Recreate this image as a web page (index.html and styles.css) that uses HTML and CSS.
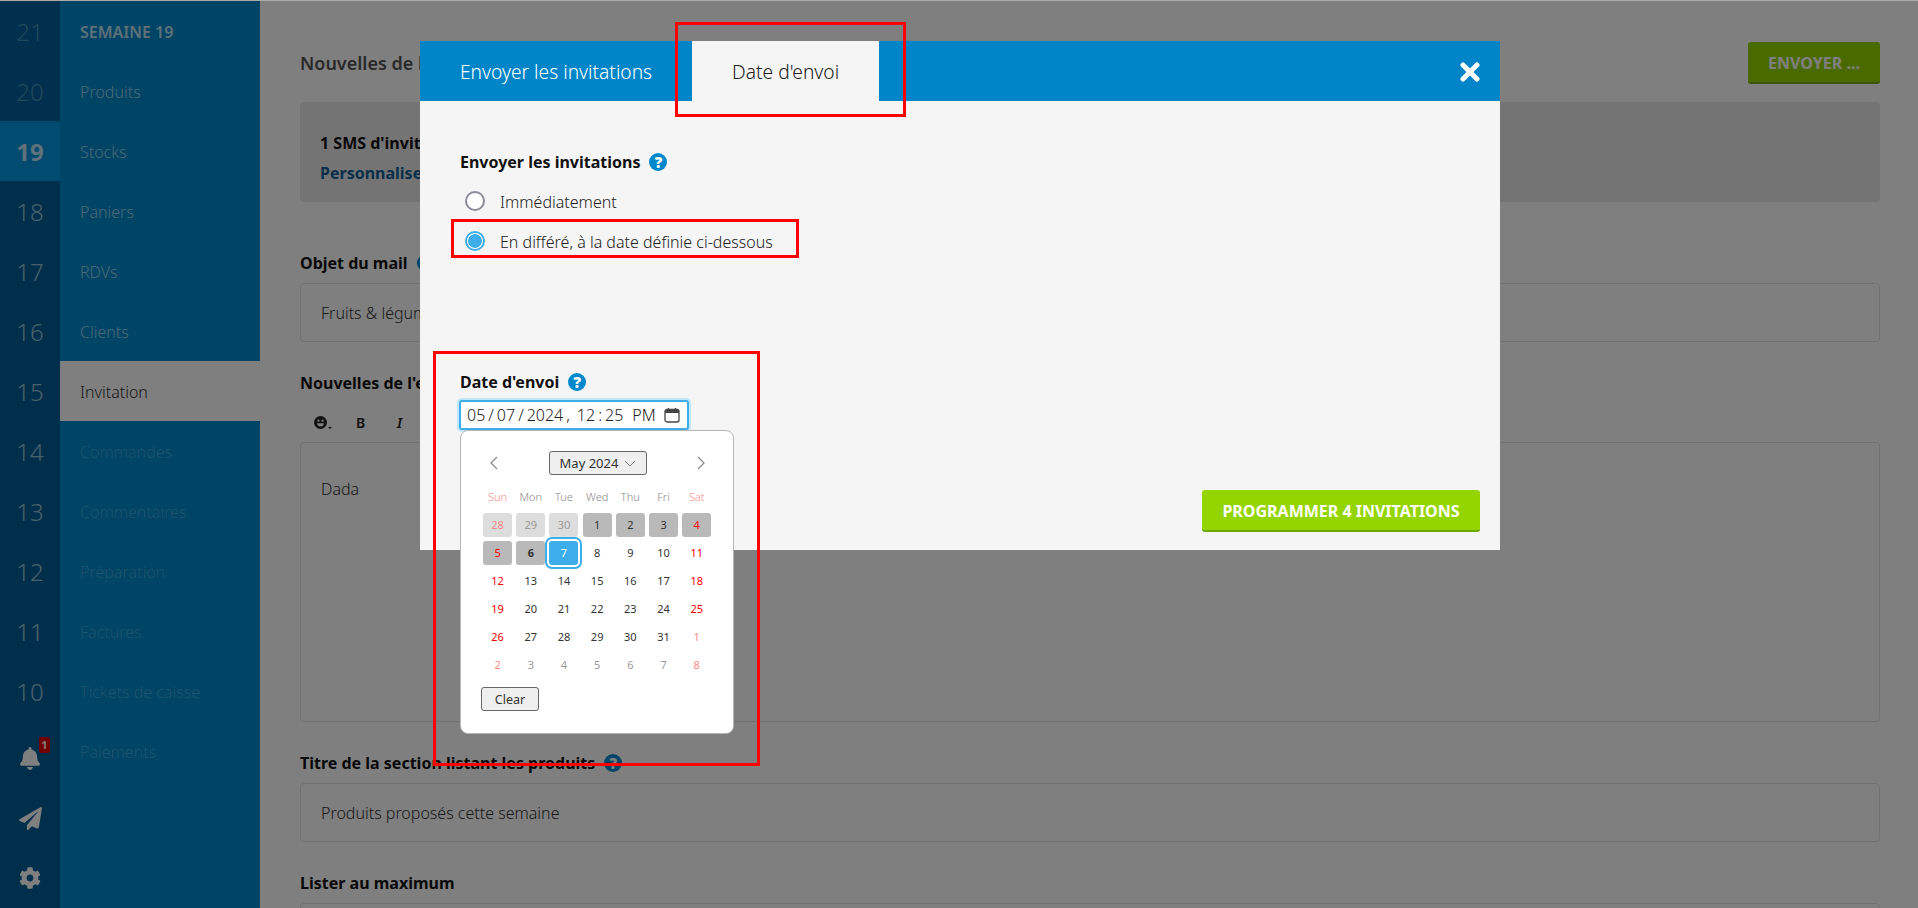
FILE: index.html
```html
<!DOCTYPE html>
<html lang="fr">
<head>
<meta charset="utf-8">
<title>Invitation</title>
<link rel="stylesheet" href="styles.css">
</head>
<body>
<div class="app">
  <nav class="rail">
    <a class="week past">21</a>
    <a class="week past">20</a>
    <a class="week current">19</a>
    <a class="week">18</a>
    <a class="week">17</a>
    <a class="week">16</a>
    <a class="week">15</a>
    <a class="week">14</a>
    <a class="week">13</a>
    <a class="week">12</a>
    <a class="week">11</a>
    <a class="week">10</a>
    <div class="rail-tools">
      <a class="tool bell">
        <svg class="ic-bell" viewBox="0 0 448 512"><path d="M224 512c35.32 0 63.97-28.65 63.97-64H160.03c0 35.35 28.65 64 63.97 64zm215.39-149.71c-19.32-20.76-55.47-51.99-55.47-154.29 0-77.7-54.48-139.9-127.94-155.16V32c0-17.67-14.32-32-31.98-32s-31.98 14.33-31.98 32v20.84C118.56 68.1 64.08 130.3 64.08 208c0 102.3-36.15 133.53-55.47 154.29-6 6.45-8.66 14.16-8.61 21.71.11 16.4 12.98 32 32.1 32h383.8c19.12 0 32-15.6 32.1-32 .05-7.55-2.61-15.27-8.61-21.71z"/></svg>
        <span class="badge">1</span>
      </a>
      <a class="tool">
        <svg class="ic-plane" viewBox="0 0 512 512"><path d="M476 3.2L12.5 270.6c-18.1 10.4-15.8 35.6 2.2 43.2L121 358.4l287.3-253.2c5.5-4.9 13.3 2.6 8.6 8.3L176 407v80.5c0 23.6 28.5 32.9 42.5 15.8L282 426l124.6 52.2c14.2 6 30.4-2.9 33-18.2l72-432C515 7.8 493.3-6.8 476 3.2z"/></svg>
      </a>
      <a class="tool">
        <svg class="ic-gear" viewBox="0 0 512 512"><path d="M487.4 315.7l-42.6-24.6c4.3-23.2 4.3-47 0-70.2l42.6-24.6c4.9-2.8 7.1-8.6 5.5-14-11.1-35.6-30-67.8-54.7-94.6-3.8-4.1-10-5.1-14.8-2.3L380.8 110c-17.9-15.4-38.5-27.3-60.8-35.1V25.8c0-5.6-3.9-10.5-9.4-11.7-36.7-8.2-74.3-7.8-109.2 0-5.5 1.2-9.4 6.1-9.4 11.7V75c-22.2 7.9-42.8 19.8-60.8 35.1L88.7 85.5c-4.9-2.8-11-1.9-14.8 2.3-24.7 26.7-43.6 58.9-54.7 94.6-1.7 5.4.6 11.2 5.5 14L67.3 221c-4.3 23.2-4.3 47 0 70.2l-42.6 24.6c-4.9 2.8-7.1 8.6-5.5 14 11.1 35.6 30 67.8 54.7 94.6 3.8 4.1 10 5.1 14.8 2.3l42.6-24.6c17.9 15.4 38.5 27.3 60.8 35.1v49.2c0 5.6 3.9 10.5 9.4 11.7 36.7 8.2 74.3 7.8 109.2 0 5.5-1.2 9.4-6.1 9.4-11.7v-49.2c22.2-7.9 42.8-19.8 60.8-35.1l42.6 24.6c4.9 2.8 11 1.9 14.8-2.3 24.7-26.7 43.6-58.9 54.7-94.6 1.5-5.5-.7-11.3-5.6-14.1zM256 336c-44.1 0-80-35.9-80-80s35.9-80 80-80 80 35.9 80 80-35.9 80-80 80z"/></svg>
      </a>
    </div>
  </nav>

  <nav class="side">
    <div class="side-item side-title">SEMAINE 19</div>
    <a class="side-item">Produits</a>
    <a class="side-item">Stocks</a>
    <a class="side-item">Paniers</a>
    <a class="side-item">RDVs</a>
    <a class="side-item">Clients</a>
    <a class="side-item active">Invitation</a>
    <a class="side-item off">Commandes</a>
    <a class="side-item off">Commentaires</a>
    <a class="side-item off">Préparation</a>
    <a class="side-item off">Factures</a>
    <a class="side-item off">Tickets de caisse</a>
    <a class="side-item off">Paiements</a>
  </nav>

  <main class="main">
    <header class="page-head">
      <h1 class="page-title">Nouvelles de la semaine</h1>
      <button class="btn-send">ENVOYER ...</button>
    </header>

    <section class="sms-box">
      <div class="sms-line">1 SMS d'invitation</div>
      <a class="sms-link">Personnaliser</a>
    </section>

    <div class="field field-first">
      <div class="label">Objet du mail <span class="help dim">?</span></div>
      <div class="input">Fruits &amp; légumes</div>
    </div>

    <div class="field">
      <div class="label">Nouvelles de l'exploitation</div>
      <div class="toolbar">
        <span class="tb-emoji">
          <svg class="ic-smile" viewBox="0 0 14 14"><circle cx="7" cy="7" r="7"/><circle class="cut" cx="4.8" cy="5" r="1.2"/><circle class="cut" cx="9.2" cy="5" r="1.2"/><path class="cut" d="M3.200 7.800h7.600c-.3 2.200-1.900 3.500-3.800 3.500S3.500 10 3.200 7.800z"/></svg>
          <span class="caret"></span>
        </span>
        <span class="tb-btn">B</span>
        <span class="tb-btn ital">I</span>
      </div>
      <div class="editor">Dada</div>
    </div>

    <div class="field">
      <div class="label">Titre de la section listant les produits <span class="help dim">?</span></div>
      <div class="input">Produits proposés cette semaine</div>
    </div>

    <div class="field">
      <div class="label">Lister au maximum</div>
      <div class="input"></div>
    </div>
  </main>
</div>

<div class="overlay"></div>

<div class="modal">
  <div class="modal-head">
    <div class="tab">Envoyer les invitations</div>
    <div class="tab tab-on">Date d'envoi</div>
    <svg class="close" viewBox="0 0 20 20"><path d="M3 3l14 14M17 3L3 17"/></svg>
  </div>
  <div class="modal-body">
    <div class="label">Envoyer les invitations <span class="help">?</span></div>
    <div class="radios">
      <label class="radio"><span class="dot"></span><span class="radio-text">Immédiatement</span></label>
      <label class="radio"><span class="dot dot-on"></span><span class="radio-text">En différé, à la date définie ci-dessous</span></label>
    </div>

    <div class="date-field">
      <div class="label">Date d'envoi <span class="help">?</span></div>
      <div class="date-input">
        <span>05</span><span>/</span><span>07</span><span>/</span><span>2024</span><span class="comma">,</span><span>12</span><span>:</span><span>25</span><span class="ampm">PM</span>
        <svg class="ic-cal" viewBox="0 0 16 16"><rect x="1" y="2.500" width="14" height="12.500" rx="2"/><path class="fill" d="M1 6v-1.500a2 2 0 0 1 2-2h10a2 2 0 0 1 2 2v1.500z"/><path d="M4.500 1v2.500M11.500 1v2.500"/></svg>
      </div>

      <div class="picker">
        <div class="picker-nav">
          <svg class="chev" viewBox="0 0 8 14"><path d="M7 1L1 7l6 6"/></svg>
          <div class="month-btn">May 2024
            <svg class="month-caret" viewBox="0 0 12 7"><path d="M1 1l5 5 5-5"/></svg>
          </div>
          <svg class="chev" viewBox="0 0 8 14"><path d="M1 1l6 6-6 6"/></svg>
        </div>
        <div class="cal">
          <span class="wd we">Sun</span><span class="wd">Mon</span><span class="wd">Tue</span><span class="wd">Wed</span><span class="wd">Thu</span><span class="wd">Fri</span><span class="wd we">Sat</span>

          <span class="d we out pale">28</span><span class="d out pale">29</span><span class="d out pale">30</span><span class="d past">1</span><span class="d past">2</span><span class="d past">3</span><span class="d we past">4</span>
          <span class="d we past">5</span><span class="d past today">6</span><span class="d sel">7</span><span class="d">8</span><span class="d">9</span><span class="d">10</span><span class="d we">11</span>
          <span class="d we">12</span><span class="d">13</span><span class="d">14</span><span class="d">15</span><span class="d">16</span><span class="d">17</span><span class="d we">18</span>
          <span class="d we">19</span><span class="d">20</span><span class="d">21</span><span class="d">22</span><span class="d">23</span><span class="d">24</span><span class="d we">25</span>
          <span class="d we">26</span><span class="d">27</span><span class="d">28</span><span class="d">29</span><span class="d">30</span><span class="d">31</span><span class="d we out">1</span>
          <span class="d we out">2</span><span class="d out">3</span><span class="d out">4</span><span class="d out">5</span><span class="d out">6</span><span class="d out">7</span><span class="d we out">8</span>
        </div>
        <div class="clear-btn">Clear</div>
      </div>
    </div>

    <button class="btn-go">PROGRAMMER 4 INVITATIONS</button>
  </div>
</div>

<div class="mark mark-tab"></div>
<div class="mark mark-radio"></div>
<div class="mark mark-date"></div>
</body>
</html>
```

FILE: styles.css
```css
* { box-sizing: border-box; }
html, body { margin: 0; height: 908px; overflow: hidden; }
body {
  font-family: "Noto Sans", "Open Sans", sans-serif;
  font-size: 16px;
  color: #333;
  background: #fff;
  border-top: 1px solid #aaa;
}
.app { display: flex; height: 907px; overflow: hidden; }

/* week rail */
.rail { width: 60px; flex: none; background: #005f98; display: flex; flex-direction: column; }
.week {
  height: 60px; flex: none; display: flex; align-items: center; justify-content: center;
  font-size: 24px; font-weight: 300; color: rgba(255,255,255,.62);
}
.week.past { background: #00609a; color: rgba(255,255,255,.3); }
.week.current { background: #0096de; color: rgba(255,255,255,.75); font-weight: 700; }
.rail-tools { margin-top: auto; }
.tool { height: 60px; display: flex; align-items: center; justify-content: center; position: relative; }
.tool svg { fill: #fff; }
.ic-bell { width: 20px; height: 23px; }
.ic-plane { width: 23px; height: 23px; }
.ic-gear { width: 22px; height: 22px; }
.badge {
  position: absolute; left: 39px; top: 9px; width: 11px; height: 16px; border-radius: 2px;
  background: #e60000; color: #fff; font-size: 11px; font-weight: 700; line-height: 16px; text-align: center;
}

/* side menu */
.side { width: 200px; flex: none; background: #0088cc; }
.side-item {
  display: flex; align-items: center; height: 60px; padding: 2px 0 0 20px;
  font-size: 16px; font-weight: 300; color: rgba(255,255,255,.62);
}
.side-title { font-weight: 600; color: rgba(255,255,255,.75); }
.side-item.active { background: #fff; color: #333; }
.side-item.off { color: rgba(255,255,255,.25); }

/* main page */
.main { flex: 1; min-width: 0; padding: 41px 38px 0 40px; }
.page-head { display: flex; align-items: center; justify-content: space-between; height: 42px; }
.page-title { margin: 0; font-size: 18px; font-weight: 600; color: #555; line-height: 42px; }
.btn-send {
  width: 132px; height: 42px; padding: 2px 0 0; border: 0; border-bottom: 2px solid #76ac00; border-radius: 3px;
  background: #94d500; color: #fff; font: 700 16px "Noto Sans", sans-serif;
}
.sms-box { margin-top: 18px; height: 100px; padding: 26px 20px 14px; background: #e9e9e9; border-radius: 4px; }
.sms-line { font-weight: 700; line-height: 30px; color: #111; }
.sms-link { display: block; font-weight: 700; line-height: 30px; color: #0f5f95; }

.field { margin-top: 31px; }
.field-first { margin-top: 51px; }
.label { font-weight: 700; line-height: 20px; color: #111; display: flex; align-items: center; gap: 9px; white-space: nowrap; }
.help {
  width: 18px; height: 18px; border-radius: 50%; background: #0088cc; color: #fff;
  font-size: 15px; font-weight: 900; line-height: 18px; text-align: center; flex: none;
}
.input {
  margin-top: 10px; height: 59px; padding: 0 20px; display: flex; align-items: center;
  border: 1px solid #e4e4e4; border-radius: 4px; background: #fff; font-weight: 300; color: #333;
}
.toolbar { display: flex; align-items: center; height: 49px; padding: 9px 0 0 14px; color: #222; }
.tb-emoji { width: 42px; display: flex; align-items: flex-end; gap: 1px; }
.ic-smile { width: 13px; height: 13px; fill: #222; }
.ic-smile .cut { fill: #fff; }
.caret { width: 0; height: 0; border: 2.500px solid transparent; border-top-color: #222; border-bottom: 0; }
.tb-btn { width: 41px; font-size: 14px; font-weight: 600; }
.ital { font-style: italic; }
.editor {
  height: 280px; padding: 34px 20px; border: 1px solid #e4e4e4; border-radius: 4px;
  font-weight: 300; line-height: 24px; color: #333;
}

/* dimming layer */
.overlay { position: fixed; left: 0; top: 1px; right: 0; bottom: 0; background: rgba(0,0,0,.5); }

/* modal */
.modal { position: absolute; left: 420px; top: 41px; width: 1080px; height: 509px; background: #f5f5f5; display: flex; flex-direction: column; }
.modal-head { height: 60px; flex: none; background: #0085c8; display: flex; align-items: stretch; position: relative; }
.tab { padding: 0 40px; display: flex; align-items: center; font-size: 19.2px; font-weight: 300; color: #fff; }
.tab-on { background: #f5f5f5; color: #222; }
.close { position: absolute; left: 1040px; top: 21px; width: 20px; height: 20px; fill: none; stroke: #fff; stroke-width: 5; stroke-linecap: round; }
.modal-body { flex: 1; padding: 51px 20px 18px 40px; display: flex; flex-direction: column; min-height: 0; }
.radios { margin-top: 9px; display: flex; flex-direction: column; }
.radio { height: 40px; display: flex; align-items: center; gap: 15px; margin-left: 5px; font-weight: 300; color: #222; }
.radio-text { padding-top: 2px; }
.dot { width: 20px; height: 20px; border-radius: 50%; border: 2px solid #8b8b9b; background: #fff; flex: none; }
.dot-on { border-color: #3daee9; background: radial-gradient(circle, #3daee9 0 6.500px, #fff 7.200px); }

.date-field { margin-top: 111px; position: relative; }
.date-input {
  margin-top: 8px; margin-left: -1px; width: 230px; height: 30px; padding: 0 7px 0 6px;
  display: flex; align-items: center; gap: 3px;
  border: 2px solid #3daee9; border-radius: 3px; background: #fff;
  box-shadow: 0 0 0 2px #bfe6fb; font-weight: 300; color: #222; line-height: 26px;
}
.comma { margin-right: 4px; }
.ampm { margin-left: 6px; }
.ic-cal { width: 16px; height: 16px; margin-left: auto; fill: none; stroke: #444; stroke-width: 1.300; }
.ic-cal .fill { fill: #444; stroke: none; }

.picker {
  position: absolute; left: 0; top: 58px; width: 274px; height: 304px; padding: 20px 19px 0 20px;
  background: #fff; border: 1px solid #b5b5b5; border-radius: 8px; z-index: 2;
}
.picker-nav { display: flex; align-items: center; justify-content: space-between; height: 24px; padding: 0 9px; }
.chev { width: 8px; height: 14px; fill: none; stroke: #8a8a8a; stroke-width: 1.200; }
.month-btn {
  width: 98px; height: 24px; display: flex; align-items: center; justify-content: center; gap: 5px; padding-left: 2px;
  border: 1px solid #666; border-radius: 3px; background: #efefef; font-size: 13px; color: #333;
}
.month-caret { width: 14px; height: 7px; fill: none; stroke: #888; stroke-width: 1; }
.cal { margin-top: 8px; display: grid; grid-template-columns: repeat(7, 33.200px); grid-auto-rows: 28px; justify-items: center; align-items: center; }
.wd { padding-bottom: 2px; font-size: 11px; font-weight: 300; color: #888; }
.wd.we { color: #f88; }
.d {
  width: 29px; height: 24px; padding-bottom: 2px; display: flex; align-items: center; justify-content: center;
  font-size: 11px; color: #333; border-radius: 3px;
}
.d.we { color: #f00; }
.d.out { color: #999; }
.d.we.out { color: #f88; }
.d.past { background: #b9b9b9; }
.d.pale { background: #ddd; }
.d.today { font-weight: 700; }
.d.sel { background: #3daee9; color: #fff; box-shadow: 0 0 0 2px #fff, 0 0 0 4px #3daee9; }
.clear-btn {
  margin-top: 8px; width: 58px; height: 24px; display: flex; align-items: center; justify-content: center;
  border: 1px solid #666; border-radius: 3px; background: #efefef; font-size: 12.500px; color: #333;
}

.btn-go {
  margin-top: auto; align-self: flex-end; width: 278px; height: 42px; padding: 2px 0 0;
  border: 0; border-bottom: 2px solid #6aa800; border-radius: 3px;
  background: #94d500; color: #fff; font: 700 16px "Noto Sans", sans-serif;
}

/* red annotation boxes */
.mark { position: absolute; border: 3px solid #f00; z-index: 5; }
.mark-tab { left: 675px; top: 22px; width: 231px; height: 95px; }
.mark-radio { left: 451px; top: 219px; width: 348px; height: 39px; }
.mark-date { left: 433px; top: 351px; width: 327px; height: 415px; }
```
